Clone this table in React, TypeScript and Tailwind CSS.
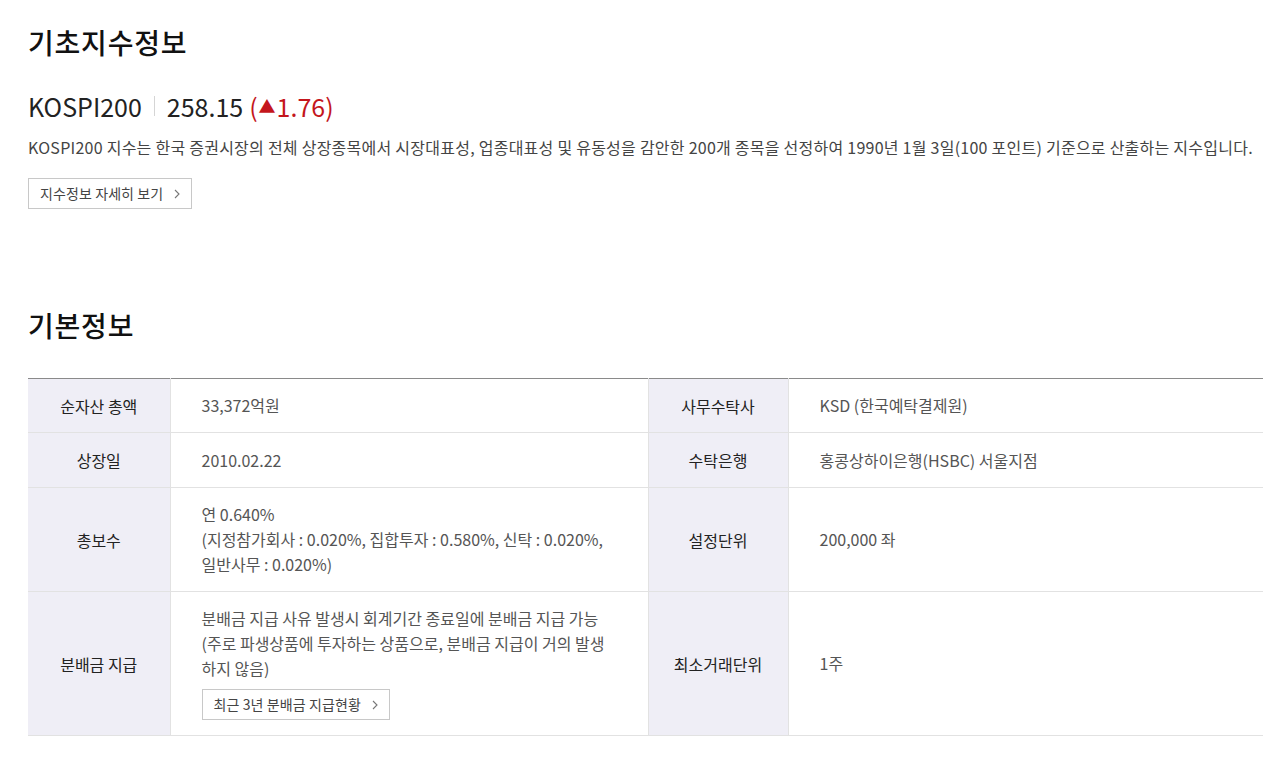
import type { ReactNode } from "react";

const font = { fontFamily: '"Noto Sans CJK KR", "Noto Sans", sans-serif' };

function Chevron() {
  return (
    <svg width="6" height="10" viewBox="0 0 6 10" className="ml-[11px]" aria-hidden>
      <path d="M1 1l4 4-4 4" fill="none" stroke="#777" strokeWidth="1.1" />
    </svg>
  );
}

function LinkButton({ children }: { children: ReactNode }) {
  return (
    <button
      type="button"
      className="inline-flex h-[31px] items-center border border-[#c8c8c8] bg-white pl-[11px] pr-[11px] text-[14px] tracking-[0.1px] text-[#444]"
    >
      {children}
      <Chevron />
    </button>
  );
}

function Th({ children }: { children: ReactNode }) {
  return (
    <th className="border-b border-r border-[#e2e2e2] bg-[#efeef6] text-center text-[16px] font-normal text-[#222]">
      {children}
    </th>
  );
}

function Td({ children, last }: { children: ReactNode; last?: boolean }) {
  return (
    <td
      className={`border-b border-[#e2e2e2] py-[14px] pl-[31px] pr-[30px] text-left align-middle text-[16px] leading-[25px] text-[#555] ${last ? "" : "border-r"}`}
    >
      {children}
    </td>
  );
}

export default function App() {
  return (
    <div className="min-h-[776px] bg-white pl-[28px] pr-[17px] pt-[21px]" style={font}>
      <h2 className="text-[28px] font-medium leading-[42px] tracking-[0.8px] text-[#111]">기초지수정보</h2>

      <div className="mt-[25px] flex items-center text-[25px] leading-[36px] text-[#222]">
        <span>KOSPI200</span>
        <span className="mx-[12px] h-[20px] w-px bg-[#d5d5d5]" />
        <span>258.15</span>
        <span className="ml-[6px] flex items-center text-[#c4161c]">
          (<span className="mx-[1px] text-[17px]">▲</span>1.76)
        </span>
      </div>

      <p className="mt-[10px] text-[16px] leading-[26px] tracking-[0.25px] text-[#444]">
        KOSPI200 지수는 한국 증권시장의 전체 상장종목에서 시장대표성, 업종대표성 및 유동성을 감안한 200개 종목을 선정하여 1990년 1월 3일(100 포인트) 기준으로 산출하는 지수입니다.
      </p>

      <div className="mt-[18px]">
        <LinkButton>지수정보 자세히 보기</LinkButton>
      </div>

      <h2 className="mt-[95px] text-[28px] font-medium leading-[42px] tracking-[0.8px] text-[#111]">기본정보</h2>

      <table className="mt-[32px] w-full table-fixed border-collapse border-t border-[#8a8a8a]">
        <colgroup>
          <col className="w-[142px]" />
          <col className="w-[478px]" />
          <col className="w-[140px]" />
          <col />
        </colgroup>
        <tbody>
          <tr className="h-[54px]">
            <Th>순자산 총액</Th>
            <Td>33,372억원</Td>
            <Th>사무수탁사</Th>
            <Td last>KSD (한국예탁결제원)</Td>
          </tr>
          <tr className="h-[55px]">
            <Th>상장일</Th>
            <Td>2010.02.22</Td>
            <Th>수탁은행</Th>
            <Td last>홍콩상하이은행(HSBC) 서울지점</Td>
          </tr>
          <tr>
            <Th>총보수</Th>
            <Td>
              연 0.640%
              <br />
              (지정참가회사 : 0.020%, 집합투자 : 0.580%, 신탁 : 0.020%, 일반사무 : 0.020%)
            </Td>
            <Th>설정단위</Th>
            <Td last>200,000 좌</Td>
          </tr>
          <tr>
            <Th>분배금 지급</Th>
            <Td>
              분배금 지급 사유 발생시 회계기간 종료일에 분배금 지급 가능 (주로 파생상품에 투자하는 상품으로, 분배금 지급이 거의 발생하지 않음)
              <div className="mb-[1px] mt-[8px]">
                <LinkButton>최근 3년 분배금 지급현황</LinkButton>
              </div>
            </Td>
            <Th>최소거래단위</Th>
            <Td last>1주</Td>
          </tr>
        </tbody>
      </table>
    </div>
  );
}
